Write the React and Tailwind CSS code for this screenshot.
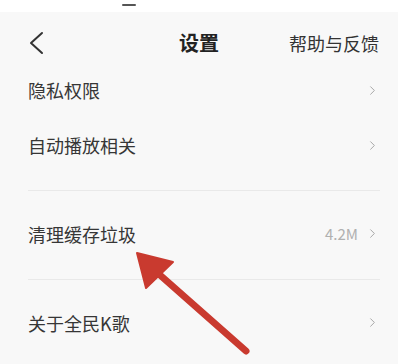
import { ChevronRight } from 'lucide-react'

const font = { fontFamily: '"Noto Sans CJK SC", "Noto Sans", sans-serif' }

function Row({ label, value, height }) {
  return (
    <div className={`flex items-center justify-between pl-[28px] pr-[18px] pb-[3px] ${height}`}>
      <span className="text-[18px] text-[#363636] leading-none">{label}</span>
      <div className="flex items-center gap-[7px]">
        {value && <span className="text-[15px] text-[#b0b0b0] leading-none">{value}</span>}
        <ChevronRight size={15} strokeWidth={1.6} className="text-[#a8a8a8]" />
      </div>
    </div>
  )
}

export default function App() {
  return (
    <div className="relative w-[398px] h-[364px] overflow-hidden bg-[#f8f8f8]" style={font}>
      {/* cut off status bar */}
      <div className="h-[12px] bg-white relative">
        <div className="absolute left-[122px] top-[4px] w-[14px] h-[2px] bg-[#555] rounded-sm" />
      </div>

      {/* header */}
      <div className="h-[52px] pt-[10px] flex items-center justify-between pl-[28px] pr-[19px] relative">
        <svg width="16" height="24" viewBox="0 0 16 24" className="text-[#333]">
          <polyline points="14,2 3,12 14,22" fill="none" stroke="currentColor" strokeWidth="2" strokeLinecap="round" strokeLinejoin="round" />
        </svg>
        <span className="absolute left-1/2 -translate-x-1/2 top-[10px] h-[42px] flex items-center text-[20px] font-semibold text-[#222]">
          设置
        </span>
        <span className="text-[18px] text-[#333]">帮助与反馈</span>
      </div>

      <Row label="隐私权限" height="h-[55px]" />
      <Row label="自动播放相关" height="h-[55px]" />

      <div className="h-[16px]" />
      <div className="mx-[28px] w-[352px] h-px bg-[#e9e9e9]" />
      <Row label="清理缓存垃圾" value="4.2M" height="h-[88px]" />
      <div className="mx-[28px] w-[352px] h-px bg-[#e9e9e9]" />
      <Row label="关于全民K歌" height="h-[88px]" />

      {/* red annotation arrow */}
      <svg className="absolute left-0 top-0 pointer-events-none" width="398" height="364" viewBox="0 0 398 364">
        <line x1="152" y1="268" x2="246" y2="351" stroke="#c93a2f" strokeWidth="7" strokeLinecap="round" />
        <polygon points="137,253 173,262 146,288" fill="#c93a2f" stroke="#c93a2f" strokeWidth="2" strokeLinejoin="round" />
      </svg>
    </div>
  )
}
